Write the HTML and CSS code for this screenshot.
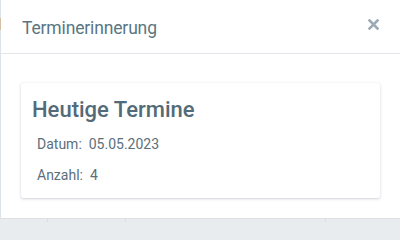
FILE: index.html
```html
<!DOCTYPE html>
<html lang="de">
<head>
<meta charset="utf-8">
<title>Terminerinnerung</title>
<link rel="stylesheet" href="styles.css">
</head>
<body>
<div class="page">
  <div class="edge"><span class="edge-mark"></span></div>
  <div class="modal">
    <div class="modal-header">
      <h1 class="modal-title">Terminerinnerung</h1>
      <button class="close" aria-label="Schließen">
        <svg width="11" height="11" viewBox="0 0 11 11"><path d="M1.5 1.5 L9.5 9.5 M9.5 1.5 L1.5 9.5" stroke="#9aabb6" stroke-width="2.6" stroke-linecap="square"/></svg>
      </button>
    </div>
    <div class="modal-body">
      <div class="card">
        <h2 class="card-title">Heutige Termine</h2>
        <p class="row">Datum:&nbsp; 05.05.2023</p>
        <p class="row">Anzahl:&nbsp; 4</p>
      </div>
    </div>
  </div>
</div>
<div class="backdrop">
  <div class="cell c1"></div>
  <div class="cell c2"></div>
  <div class="cell c3"></div>
  <div class="cell c4"></div>
</div>
</body>
</html>
```
FILE: styles.css
```css
html, body {
  margin: 0;
  padding: 0;
}
body {
  width: 400px;
  height: 222px;
  overflow: hidden;
  background: #e9ecef;
  font-family: Roboto, "Liberation Sans", sans-serif;
}
.page {
  display: flex;
  height: 218px;
}
.edge {
  width: 1px;
  background: #dde3e8;
  display: flex;
  flex-direction: column;
}
.edge-mark {
  display: block;
  margin-top: 18px;
  height: 12px;
  background: #d4bfa6;
}
.modal {
  flex: 1;
  background: #fff;
  display: flex;
  flex-direction: column;
}
.modal-header {
  height: 54px;
  border-bottom: 1px solid #e4e7eb;
  display: flex;
  align-items: center;
  justify-content: space-between;
  padding: 3px 21px 0 21px;
  box-sizing: border-box;
}
.modal-title {
  margin: 0;
  font-size: 17.5px;
  font-weight: 400;
  color: #5a7682;
  letter-spacing: -0.15px;
}
.close {
  border: 0;
  background: none;
  padding: 0;
  width: 11px;
  height: 11px;
  margin-bottom: 8px;
  display: flex;
}
.modal-body {
  padding: 29px 20px 0 20px;
}
.card {
  height: 115px;
  box-sizing: border-box;
  background: #fff;
  border-radius: 2px;
  box-shadow: 0 1px 3px rgba(60, 70, 100, 0.22), 0 0 1px rgba(60, 70, 100, 0.12);
  padding: 14px 12px 0 11px;
}
.card-title {
  margin: 0 0 6px 0;
  font-size: 22px;
  line-height: 26px;
  font-weight: 500;
  color: #536b78;
}
.row {
  margin: 0 0 0 5px;
  font-size: 14px;
  line-height: 31px;
  color: #5b6f7b;
}
.backdrop {
  display: flex;
  height: 4px;
  border-top: 1px solid #dde1e6;
}
.cell {
  border-right: 1px solid #d9dde2;
}
.c1 { width: 47px; }
.c2 { width: 77px; }
.c3 { width: 199px; }
.c4 { flex: 1; border-right: 0; }
```
